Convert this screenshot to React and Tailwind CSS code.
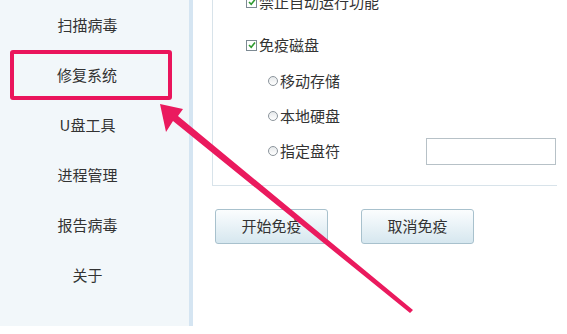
const font = { fontFamily: '"Noto Sans CJK SC", "Liberation Sans", sans-serif' }

const navItems = ['扫描病毒', '修复系统', 'U盘工具', '进程管理', '报告病毒', '关于']

function CheckBox() {
  return (
    <span className="flex h-[11px] w-[11px] shrink-0 items-center justify-center border border-[#7d8a93] bg-white">
      <svg width="8" height="8" viewBox="0 0 8 8">
        <path d="M1 4 L3.2 6.2 L7 1.6" fill="none" stroke="#2f9a2f" strokeWidth="1.6" />
      </svg>
    </span>
  )
}

function Radio() {
  return <span className="h-[10px] w-[10px] shrink-0 rounded-full border border-[#8c959c] bg-gradient-to-b from-[#e6e9eb] to-white" />
}

function Button({ children }) {
  return (
    <button className="flex h-[35px] w-[113px] items-center justify-center rounded-[3px] border border-[#a8c1cd] bg-gradient-to-b from-[#fbfdfe] to-[#d6e7ef] text-[15px] text-[#333]">
      {children}
    </button>
  )
}

export default function App() {
  return (
    <div className="relative h-[334px] w-[567px] overflow-hidden bg-white text-[#333]" style={font}>
      <div className="flex h-[326px]">
        <aside className="flex w-[193px] shrink-0 flex-col border-r-[4px] border-[#d5e5f2] bg-[#f2f7fa]">
          {navItems.map((item, i) => (
            <div
              key={item}
              className={
                'flex h-[50px] items-center justify-center text-[15px] ' +
                (i === 1 ? 'ml-[10px] mr-[17px] rounded-[3px] border-[4px] border-[#ea155c] pr-[8px]' : 'pr-[14px]')
              }
            >
              {item}
            </div>
          ))}
        </aside>

        <main className="flex flex-1 flex-col pl-[19px]">
          <section className="flex h-[186px] w-[345px] flex-col whitespace-nowrap border-b border-l border-[#d8e3ea] pl-[33px]">
            <div className="-mt-[8px] flex h-[20px] items-center gap-[2px] text-[15px]">
              <CheckBox />
              <span>禁止自动运行功能</span>
            </div>
            <div className="mt-[23px] flex h-[20px] items-center gap-[2px] text-[15px]">
              <CheckBox />
              <span>免疫磁盘</span>
            </div>
            <div className="mt-[16px] flex flex-col gap-[15px] pl-[22px] text-[15px]">
              <div className="flex h-[20px] items-center gap-[2px]">
                <Radio />
                <span>移动存储</span>
              </div>
              <div className="flex h-[20px] items-center gap-[2px]">
                <Radio />
                <span>本地硬盘</span>
              </div>
              <div className="flex h-[20px] items-center gap-[2px]">
                <Radio />
                <span className="shrink-0">指定盘符</span>
                <span className="ml-[84px] h-[27px] w-[130px] shrink-0 border border-[#b7c1c7] bg-white" />
              </div>
            </div>
          </section>
          <div className="mt-[23px] flex gap-[33px] pl-[3px]">
            <Button>开始免疫</Button>
            <Button>取消免疫</Button>
          </div>
        </main>
      </div>

      <svg className="pointer-events-none absolute left-0 top-0" width="567" height="334" viewBox="0 0 567 334">
        <polygon
          points="160,104 183,109 178,116 413,310 410,313 173,121 166,132"
          fill="#ea1a5e"
        />
      </svg>
    </div>
  )
}
